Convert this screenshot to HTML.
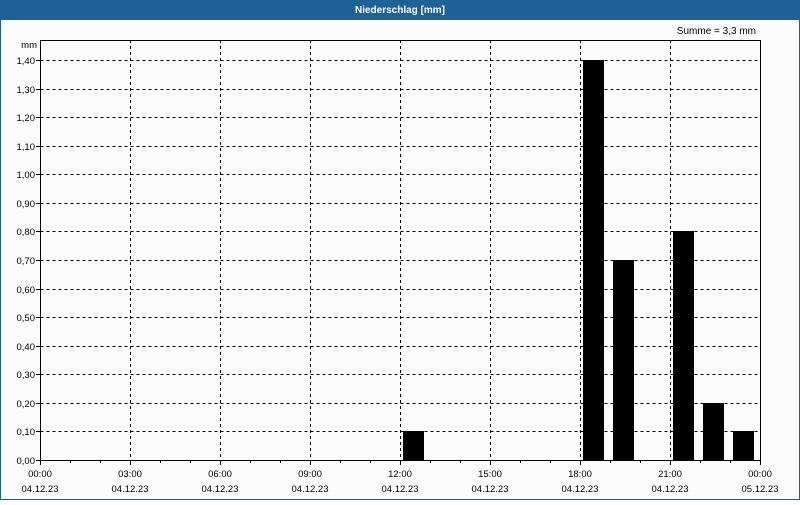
<!DOCTYPE html>
<html><head><meta charset="utf-8"><style>
body{margin:0;width:800px;height:500px;overflow:hidden;background:#fff;font-family:"Liberation Sans","DejaVu Sans",sans-serif}
</style></head><body>
<svg width="800" height="500" xmlns="http://www.w3.org/2000/svg" font-family="Liberation Sans, DejaVu Sans, sans-serif" font-size="10">
<rect x="0" y="0" width="800" height="500" fill="#1d6196"/>
<rect x="1" y="20" width="798" height="479" fill="#fcfcfc"/>
<text x="400" y="13" fill="#fff" font-weight="bold" text-anchor="middle" font-size="10">Niederschlag [mm]</text>
<text x="756" y="34" text-anchor="end" fill="#000">Summe = 3,3 mm</text>
<text x="37" y="48" text-anchor="end" fill="#000" font-size="9.5">mm</text>
<g stroke="#000" stroke-width="1" stroke-dasharray="3,3" fill="none">
<path d="M40.5 60.5H760M40.5 89.5H760M40.5 117.5H760M40.5 146.5H760M40.5 174.5H760M40.5 203.5H760M40.5 231.5H760M40.5 260.5H760M40.5 289.5H760M40.5 317.5H760M40.5 346.5H760M40.5 374.5H760M40.5 403.5H760M40.5 431.5H760"/>
<path d="M130.5 40V460M220.5 40V460M310.5 40V460M400.5 40V460M490.5 40V460M580.5 40V460M670.5 40V460"/>
</g>
<g fill="#000">
<rect x="403" y="431" width="21" height="29"/>
<rect x="583" y="60" width="21" height="400"/>
<rect x="613" y="260" width="21" height="200"/>
<rect x="673" y="231" width="21" height="229"/>
<rect x="703" y="403" width="21" height="57"/>
<rect x="733" y="431" width="21" height="29"/>
</g>
<rect x="40.5" y="40.5" width="720" height="420" fill="none" stroke="#000"/>
<g stroke="#000">
<path d="M40.5 460v5M70.5 460v3M100.5 460v3M130.5 460v5M160.5 460v3M190.5 460v3M220.5 460v5M250.5 460v3M280.5 460v3M310.5 460v5M340.5 460v3M370.5 460v3M400.5 460v5M430.5 460v3M460.5 460v3M490.5 460v5M520.5 460v3M550.5 460v3M580.5 460v5M610.5 460v3M640.5 460v3M670.5 460v5M700.5 460v3M730.5 460v3M760.5 460v5"/>
<path d="M36 60.5h4M36 89.5h4M36 117.5h4M36 146.5h4M36 174.5h4M36 203.5h4M36 231.5h4M36 260.5h4M36 289.5h4M36 317.5h4M36 346.5h4M36 374.5h4M36 403.5h4M36 431.5h4M36 460.5h4"/>
</g>
<g text-anchor="end" fill="#000" font-size="9.5">
<text x="35" y="64">1,40</text><text x="35" y="93">1,30</text><text x="35" y="121">1,20</text><text x="35" y="150">1,10</text><text x="35" y="178">1,00</text><text x="35" y="207">0,90</text><text x="35" y="235">0,80</text><text x="35" y="264">0,70</text><text x="35" y="293">0,60</text><text x="35" y="321">0,50</text><text x="35" y="350">0,40</text><text x="35" y="378">0,30</text><text x="35" y="407">0,20</text><text x="35" y="435">0,10</text><text x="35" y="464">0,00</text>
</g>
<g text-anchor="middle" fill="#000" font-size="9.5">
<text x="40" y="477">00:00</text><text x="40" y="492">04.12.23</text>
<text x="130" y="477">03:00</text><text x="130" y="492">04.12.23</text>
<text x="220" y="477">06:00</text><text x="220" y="492">04.12.23</text>
<text x="310" y="477">09:00</text><text x="310" y="492">04.12.23</text>
<text x="400" y="477">12:00</text><text x="400" y="492">04.12.23</text>
<text x="490" y="477">15:00</text><text x="490" y="492">04.12.23</text>
<text x="580" y="477">18:00</text><text x="580" y="492">04.12.23</text>
<text x="670" y="477">21:00</text><text x="670" y="492">04.12.23</text>
<text x="760" y="477">00:00</text><text x="760" y="492">05.12.23</text>
</g>
</svg>
</body></html>
